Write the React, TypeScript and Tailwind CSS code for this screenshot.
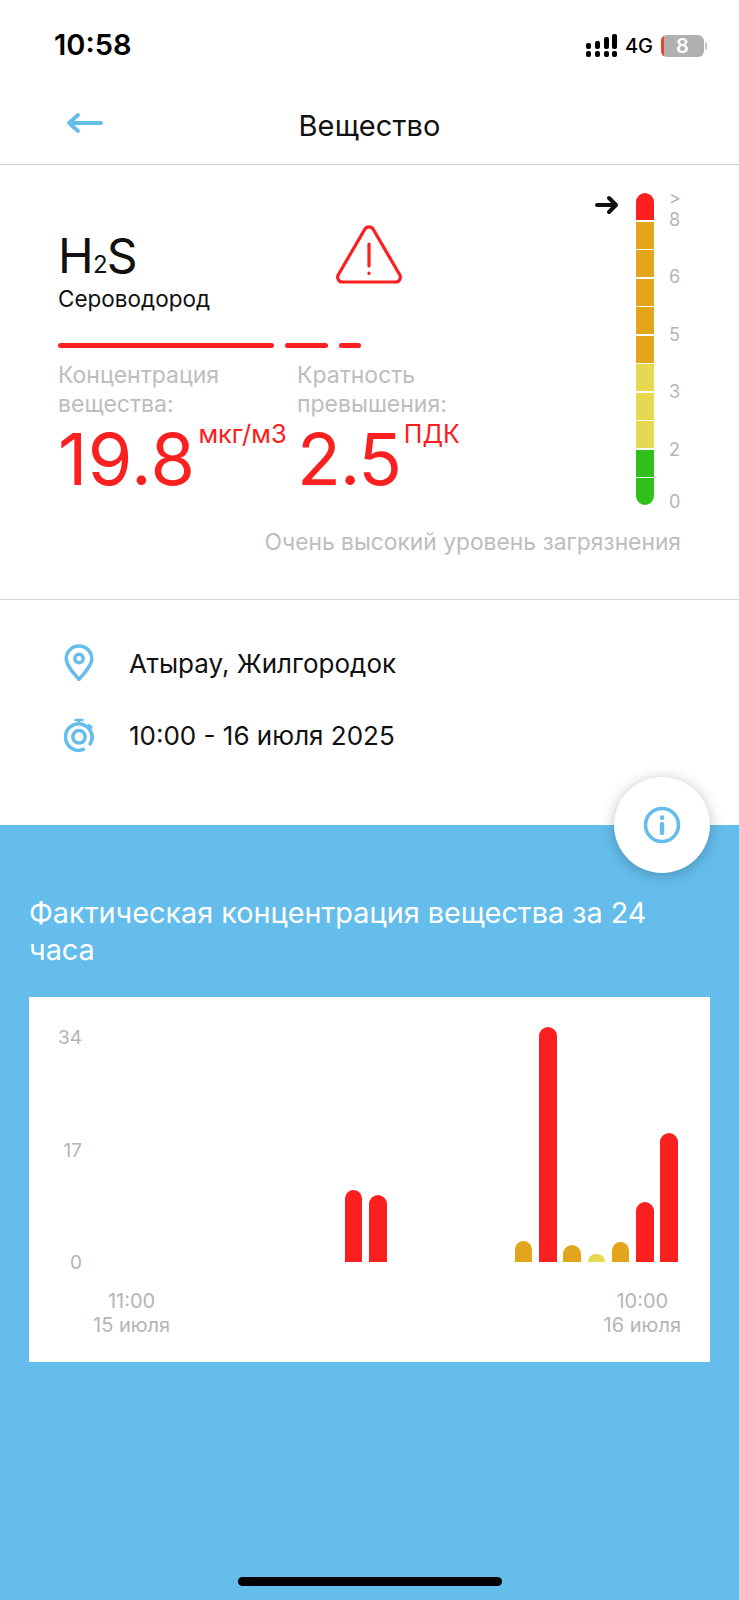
const RED = "#fb2020";

const scaleColors = [
  "bg-[#fb2020] rounded-t-full",
  "bg-[#e3a51b]",
  "bg-[#e3a51b]",
  "bg-[#e3a51b]",
  "bg-[#e3a51b]",
  "bg-[#e3a51b]",
  "bg-[#e6d84f]",
  "bg-[#e6d84f]",
  "bg-[#e6d84f]",
  "bg-[#2fc01a]",
  "bg-[#2fc01a] rounded-b-full",
];

const scaleLabels = [
  { text: ">", className: "h-[10px] leading-[10px]" },
  { text: "8", className: "mt-[7px] h-[20px] leading-[20px]" },
  { text: "6", className: "mt-[37px] h-[20px] leading-[20px]" },
  { text: "5", className: "mt-[38px] h-[20px] leading-[20px]" },
  { text: "3", className: "mt-[37px] h-[20px] leading-[20px]" },
  { text: "2", className: "mt-[38px] h-[20px] leading-[20px]" },
  { text: "0", className: "mt-[32px] h-[20px] leading-[20px]" },
];

// 24 hourly slots, px height and colour of each bar
const bars: { h: number; c: string }[] = [
  ...Array(10).fill({ h: 0, c: "" }),
  { h: 72, c: "bg-[#fb2020]" },
  { h: 67, c: "bg-[#fb2020]" },
  ...Array(5).fill({ h: 0, c: "" }),
  { h: 21, c: "bg-[#e3a51b]" },
  { h: 235, c: "bg-[#fb2020]" },
  { h: 17, c: "bg-[#e3a51b]" },
  { h: 8, c: "bg-[#e6d84f]" },
  { h: 20, c: "bg-[#e3a51b]" },
  { h: 60, c: "bg-[#fb2020]" },
  { h: 129, c: "bg-[#fb2020]" },
];

const Signal = () => (
  <svg width="32" height="23" viewBox="0 0 32 23" fill="#000">
    <rect x="0" y="9" width="5" height="6" rx="2" />
    <rect x="0" y="17" width="5" height="6" rx="2" />
    <rect x="9" y="7" width="5" height="8" rx="2" />
    <rect x="9" y="17" width="5" height="6" rx="2" />
    <rect x="18" y="3" width="5" height="12" rx="2" />
    <rect x="18" y="17" width="5" height="6" rx="2" />
    <rect x="26" y="0" width="5" height="15" rx="2" />
    <rect x="26" y="17" width="5" height="6" rx="2" />
  </svg>
);

const Battery = () => (
  <div className="flex items-center">
    <div className="relative flex h-[22px] w-[43px] items-center justify-center overflow-hidden rounded-[6px] bg-[#b0b0b0]">
      <div className="absolute left-0 top-0 h-full w-[3px] bg-[#e8452f]" />
      <span className="text-[20px] font-semibold leading-none text-white">8</span>
    </div>
    <div className="ml-[1px] h-[8px] w-[2px] rounded-r-full bg-[#c4c4c4]" />
  </div>
);

const PinIcon = () => (
  <svg width="30" height="38" viewBox="0 0 30 38" fill="none" stroke="#65bdec" strokeWidth="3.4">
    <path d="M15 35.5C10 29.5 2.2 22 2.2 14.6C2.2 7.6 8 2 15 2s12.8 5.6 12.8 12.6C27.8 22 20 29.5 15 35.5Z" strokeLinejoin="round" />
    <circle cx="15" cy="14.5" r="4.2" />
  </svg>
);

const TimerIcon = () => (
  <svg width="34" height="38" viewBox="0 0 34 38" fill="none" stroke="#65bdec" strokeWidth="4" strokeLinecap="round">
    <path d="M13 2h8M17 2v4" strokeWidth="3" />
    <path d="M28.5 8l2.5 2.5" strokeWidth="3" />
    <path d="M29.6 29A15 15 0 1 0 22 35.4" />
    <circle cx="17" cy="21" r="7" />
    <path d="M32 19.5a15 15 0 0 1 -.4 5" />
  </svg>
);

export default function App() {
  return (
    <div
      className="relative h-[1600px] w-[739px] overflow-hidden bg-white text-black"
      style={{ fontFamily: "Inter, 'Liberation Sans', sans-serif" }}
    >
      {/* status bar */}
      <div className="flex h-[90px] items-start justify-between pl-[54px] pr-[32px] pt-[34px]">
        <span className="text-[29px] font-semibold leading-[22px]">10:58</span>
        <div className="flex items-center">
          <Signal />
          <span className="ml-[7px] mr-[8px] text-[20px] font-medium leading-none">4G</span>
          <Battery />
        </div>
      </div>

      {/* nav */}
      <div className="relative flex h-[75px] items-start justify-center border-b border-[#cfcfcf] pt-[19px]">
        <svg className="absolute left-[66px] top-[22px]" width="37" height="22" viewBox="0 0 37 22" fill="none" stroke="#65bdec" strokeWidth="3.8" strokeLinecap="round" strokeLinejoin="round">
          <path d="M35 11H4M12 3l-9 8 9 8" />
        </svg>
        <span className="text-[29px] leading-[34px] tracking-[0.1px] text-[#111]">Вещество</span>
      </div>

      {/* substance card */}
      <div className="h-[435px] border-b border-[#d9d9d9] pl-[58px] pr-[58px] pt-[28px]">
        <div className="flex justify-between">
          <div className="w-[420px] pt-[39px]">
            <div className="relative">
              <div className="text-[48px] leading-[48px] tracking-[-0.8px] text-[#111]">
                H<span className="text-[24px]">2</span>S
              </div>
              <svg className="absolute left-[277px] top-[-8px]" width="68" height="60" viewBox="0 0 68 60" fill="none" stroke={RED} strokeWidth="3.2" strokeLinecap="round" strokeLinejoin="round">
                <path d="M29.8 5.2a5 5 0 0 1 8.4 0l26.5 45.6a4.8 4.8 0 0 1-4.2 7.2H7.5a4.8 4.8 0 0 1-4.2-7.2Z" />
                <path d="M34 20v22" />
                <path d="M34 49v.5" />
              </svg>
            </div>
            <div className="mt-[-3px] text-[22.5px] leading-[26px] text-[#111]">Сероводород</div>
            <div className="mt-[31px] flex gap-[11px]">
              <div className="h-[5px] w-[216px] rounded-full bg-[#fb2020]" />
              <div className="h-[5px] w-[43px] rounded-full bg-[#fb2020]" />
              <div className="h-[5px] w-[22px] rounded-full bg-[#fb2020]" />
            </div>
            <div className="mt-[13px] flex">
              <div className="w-[239px]">
                <div className="text-[23px] leading-[29px] text-[#bdbdbd]">
                  Концентрация
                  <br />
                  вещества:
                </div>
                <div className="mt-[1px] flex items-start">
                  <span className="text-[72px] leading-[78px] tracking-[0.4px] text-[#fb2020]">19.8</span>
                  <span className="ml-[3px] mt-[-1px] text-[25.5px] leading-[30px] text-[#fb2020]">мкг/м3</span>
                </div>
              </div>
              <div>
                <div className="text-[23px] leading-[29px] text-[#bdbdbd]">
                  Кратность
                  <br />
                  превышения:
                </div>
                <div className="mt-[1px] flex items-start">
                  <span className="text-[72px] leading-[78px] tracking-[-1.2px] text-[#fb2020]">2.5</span>
                  <span className="ml-[3px] mt-[-1px] text-[25px] leading-[30px] text-[#fb2020]">ПДК</span>
                </div>
              </div>
            </div>
          </div>

          {/* level scale */}
          <div className="flex items-start">
            <svg className="mr-[17px] mt-[2px]" width="24" height="20" viewBox="0 0 24 20" fill="none" stroke="#111" strokeWidth="4" strokeLinecap="round" strokeLinejoin="round">
              <path d="M2 10h19M14 3l7 7-7 7" />
            </svg>
            <div className="flex w-[18px] flex-col gap-[1.5px]">
              {scaleColors.map((c, i) => (
                <div key={i} className={`h-[27px] w-full ${c}`} />
              ))}
            </div>
            <div className="ml-[15px] flex w-[12px] flex-col text-[18px] text-[#b5b5b5]">
              {scaleLabels.map((l, i) => (
                <div key={i} className={l.className}>
                  {l.text}
                </div>
              ))}
            </div>
          </div>
        </div>
        <div className="mt-[16px] whitespace-nowrap text-right text-[22.8px] leading-[28px] text-[#bdbdbd]">
          Очень высокий уровень загрязнения
        </div>
      </div>

      {/* place and time */}
      <div className="flex h-[225px] flex-col gap-[34px] pl-[64px] pt-[44px]">
        <div className="flex h-[38px] items-center">
          <div className="flex w-[30px] justify-center">
            <PinIcon />
          </div>
          <span className="ml-[35px] text-[26px] text-[#111]">Атырау, Жилгородок</span>
        </div>
        <div className="flex h-[38px] items-center">
          <div className="flex w-[30px] justify-center">
            <TimerIcon />
          </div>
          <span className="ml-[35px] text-[26px] text-[#111]">10:00 - 16 июля 2025</span>
        </div>
      </div>

      {/* 24h chart */}
      <div className="relative h-[775px] bg-[#65bdec] px-[29px] pt-[69px]">
        <button className="absolute right-[29px] top-[-48px] flex h-[96px] w-[96px] items-center justify-center rounded-full bg-white shadow-[0_2px_14px_rgba(0,0,0,0.25)]">
          <svg width="38" height="38" viewBox="0 0 38 38" fill="none" stroke="#65bdec" strokeWidth="3.6" strokeLinecap="round">
            <circle cx="19" cy="19" r="16.5" />
            <path d="M19 18v9" strokeWidth="4.4" />
            <path d="M19 11.5v.2" strokeWidth="4.6" />
          </svg>
        </button>

        <h2 className="text-[28.8px] font-normal leading-[37px] text-white">
          Фактическая концентрация вещества за 24 часа
        </h2>

        <div className="mt-[29px] h-[365px] bg-white pl-[29px] pr-[32px] pt-[30px]">
          <div className="flex items-start">
            <div className="mt-[1px] flex h-[245px] w-[24px] flex-col justify-between text-right text-[19px] leading-[20px] text-[#b5b5b5]">
              <span>34</span>
              <span>17</span>
              <span>0</span>
            </div>
            <div className="ml-[20px] flex h-[235px] flex-1 items-end justify-between">
              {bars.map((b, i) => (
                <div key={i} className={`w-[17.5px] rounded-t-full ${b.c}`} style={{ height: b.h }} />
              ))}
            </div>
          </div>
          <div className="ml-[35px] mr-[-3px] mt-[16px] flex justify-between text-center text-[20px] leading-[24px] text-[#b5b5b5]">
            <div>
              11:00
              <br />
              15 июля
            </div>
            <div>
              10:00
              <br />
              16 июля
            </div>
          </div>
        </div>
      </div>

      {/* home indicator */}
      <div className="absolute bottom-[14px] left-[238px] h-[9px] w-[264px] rounded-full bg-black" />
    </div>
  );
}
